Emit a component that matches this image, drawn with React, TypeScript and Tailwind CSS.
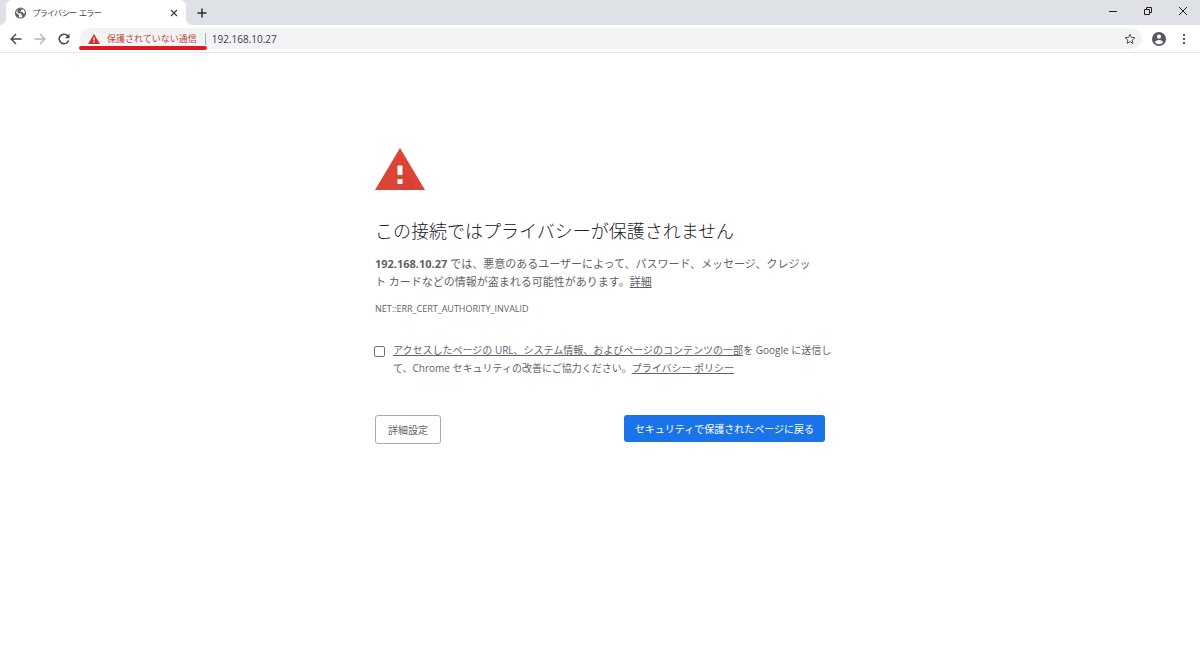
import type { ReactNode } from 'react';

interface IconButtonProps {
  label: string;
  className?: string;
  children: ReactNode;
}

function IconButton({ label, className = '', children }: IconButtonProps) {
  return (
    <button
      type="button"
      aria-label={label}
      className={`flex shrink-0 items-center justify-center ${className}`}
    >
      {children}
    </button>
  );
}

function TabStrip() {
  return (
    <div className="flex h-[25px] items-end bg-[#dee1e6] pl-1.5">
      <div className="relative flex h-[25px] w-[180px] items-center rounded-t-md bg-white pr-2 pl-2">
        <svg className="absolute bottom-0 -left-1.5 size-1.5" viewBox="0 0 6 6" fill="#fff" aria-hidden="true">
          <path d="M6 0v6H0a6 6 0 0 0 6-6z" />
        </svg>
        <svg className="absolute -right-1.5 bottom-0 size-1.5" viewBox="0 0 6 6" fill="#fff" aria-hidden="true">
          <path d="M0 0v6h6a6 6 0 0 1-6-6z" />
        </svg>
        <svg className="size-3 shrink-0" viewBox="0 0 12 12" aria-hidden="true">
          <circle cx="6.500" cy="6" r="5" fill="#fff" stroke="#5f6368" strokeWidth="1.1" />
          <path
            d="M1.600 5.200L5 8.200l-.2 2.600A5 5 0 0 1 1.600 5.200zM4.200 1.600L8.600 1.300c.3 1-.2 1.600-1.200 1.700-.2 1-1.200 1-1.300 1.800h2.300l.7 1.400 2.300.2c-.3 2-1.700 3.800-3.400 4.300l.2-1.900-1-1.200V6.400H4.600L3.100 4.800z"
            fill="#5f6368"
          />
        </svg>
        <span className="ml-[7px] grow text-[8px] leading-3 whitespace-nowrap text-[#45494d] [font-feature-settings:'palt']">
          プライバシー エラー
        </span>
        <IconButton label="タブを閉じる" className="size-2">
          <svg className="size-2" viewBox="0 0 8 8" stroke="#3c4043" strokeWidth="1.3">
            <path d="M1 1l6 6M7 1l-6 6" />
          </svg>
        </IconButton>
      </div>
      <IconButton label="新しいタブ" className="ml-2.5 h-[25px] w-3">
        <svg className="size-3" viewBox="0 0 12 12" stroke="#2b2e31" strokeWidth="1.5">
          <path d="M6 1.5v9M1.5 6h9" />
        </svg>
      </IconButton>
      <div className="ml-auto flex h-[25px] items-start">
        <IconButton label="最小化" className="h-[22px] w-[35px]">
          <svg className="size-2.5" viewBox="0 0 10 10" stroke="#222" strokeWidth="1">
            <path d="M1 5.5h8" />
          </svg>
        </IconButton>
        <IconButton label="元に戻す" className="h-[22px] w-[35px]">
          <svg className="size-2.5" viewBox="0 0 10 10" fill="none" stroke="#222" strokeWidth="1">
            <path d="M1.5 3.5h5v5h-5zM3.5 3.5v-2h5v5h-2" />
          </svg>
        </IconButton>
        <IconButton label="閉じる" className="h-[22px] w-[35px]">
          <svg className="size-2.5" viewBox="0 0 10 10" stroke="#222" strokeWidth="1">
            <path d="M1 1l8 8M9 1l-8 8" />
          </svg>
        </IconButton>
      </div>
    </div>
  );
}

function Toolbar() {
  return (
    <div className="flex h-7 items-center border-b border-[#e3e5e8] px-2.5">
      <IconButton label="戻る" className="w-3">
        <svg className="size-3" viewBox="0 0 12 12" fill="none" stroke="#45494d" strokeWidth="1.4">
          <path d="M11.5 6H1.5M6 1L1.2 6 6 11" />
        </svg>
      </IconButton>
      <IconButton label="進む" className="ml-3 w-3">
        <svg className="size-3" viewBox="0 0 12 12" fill="none" stroke="#b4b7ba" strokeWidth="1.4">
          <path d="M.5 6h10M6 1l4.8 5L6 11" />
        </svg>
      </IconButton>
      <IconButton label="再読み込み" className="ml-3 w-3">
        <svg className="size-3" viewBox="0 0 12 12" fill="none" stroke="#45494d" strokeWidth="1.5">
          <path d="M10.6 7.4A4.8 4.8 0 1 1 9.6 2.8L10.8 4" />
          <path d="M11.5.6v4.6H6.9z" fill="#45494d" stroke="none" />
        </svg>
      </IconButton>

      <div className="relative ml-2.5 flex h-[21px] grow items-center rounded-full bg-[#f1f3f4] pr-1.5 pl-2">
        <svg className="h-2.5 w-3 shrink-0" viewBox="0 0 12 10" aria-hidden="true">
          <path d="M6 0l6 10H0z" fill="#c5382c" />
          <path d="M5.4 3.6h1.2v2.8H5.4zM5.4 7.3h1.2v1.2H5.4z" fill="#fff" />
        </svg>
        <button
          type="button"
          className="ml-[7px] text-left text-[9px] leading-4 whitespace-nowrap text-[#c5483d]"
        >
          保護されていない通信
        </button>
        <span className="ml-2 h-3 w-px bg-[#a9acb0]" />
        <input
          type="text"
          aria-label="アドレス"
          defaultValue="192.168.10.27"
          className="ml-1.5 min-w-0 grow bg-transparent text-[10px] leading-4 text-[#3c4043] outline-none"
        />
        <IconButton label="ブックマークに追加" className="w-3">
          <svg className="size-3" viewBox="0 0 12 12" fill="none" stroke="#55595d" strokeWidth="1">
            <path d="M6 1.2l1.4 3.2 3.5.3-2.7 2.3.8 3.4L6 8.6l-3 1.8.8-3.4L1.1 4.7l3.500-.3z" />
          </svg>
        </IconButton>
        <span className="absolute top-[18px] -left-px h-1 w-32 rounded-full bg-[#e01a22]" />
      </div>

      <IconButton label="プロフィール" className="ml-2.5 w-3.5">
        <svg className="size-3.5" viewBox="0 0 14 14" aria-hidden="true">
          <circle cx="7" cy="7" r="7" fill="#55595d" />
          <circle cx="7" cy="4.700" r="2.1" fill="#fff" />
          <path d="M2.800 10.200c.6-1.500 2.700-2.200 4.200-2.200s3.600.7 4.200 2.200A5 5 0 0 1 7 12.200a5 5 0 0 1-4.200-2z" fill="#fff" />
        </svg>
      </IconButton>
      <IconButton label="メニュー" className="ml-3 w-3">
        <svg className="size-3" viewBox="0 0 12 12" fill="#55595d">
          <circle cx="6" cy="2" r="1.200" />
          <circle cx="6" cy="6" r="1.200" />
          <circle cx="6" cy="10" r="1.200" />
        </svg>
      </IconButton>
    </div>
  );
}

function PrivacyError() {
  return (
    <main className="mx-auto w-full max-w-[450px] pt-[95px] text-[#5f6368]">
      <svg className="h-[42px] w-[50px]" viewBox="0 0 50 42" aria-hidden="true">
        <path d="M25 0l25 42H0z" fill="#db4437" />
        <path d="M27 18l14 24H25l-2-6z" fill="#c93d30" opacity=".3" />
        <path d="M22.500 17.500h5v9.500h-5zM22.500 31h5v5h-5z" fill="#fff" />
      </svg>

      <h1 className="mt-7 text-lg leading-[26px] font-light whitespace-nowrap text-[#202124]">
        この接続ではプライバシーが保護されません
      </h1>
      <p className="mt-[11px] text-[11px] leading-[18px] whitespace-nowrap">
        <strong className="font-bold">192.168.10.27</strong>{' '}
        では、悪意のあるユーザーによって、パスワード、メッセージ、クレジッ
        <br />
        ト カードなどの情報が盗まれる可能性があります。
        <a href="#details" className="underline">
          詳細
        </a>
      </p>
      <p className="mt-2.5 text-[9px] leading-4">NET::ERR_CERT_AUTHORITY_INVALID</p>

      <div className="mt-6 flex items-start">
        <input
          id="report"
          type="checkbox"
          className="mt-[5px] -ml-px size-[11px] shrink-0 appearance-none rounded-xs border border-[#707478] bg-white checked:bg-[#1a73e8]"
        />
        <label htmlFor="report" className="ml-2 text-[10px] leading-[18px] whitespace-nowrap">
          <a href="#report-contents" className="underline">
            アクセスしたページの URL、システム情報、およびページのコンテンツの一部
          </a>
          を Google に送信し
          <br />
          て、Chrome セキュリティの改善にご協力ください。
          <a href="#privacy" className="underline">
            プライバシー ポリシー
          </a>
        </label>
      </div>

      <div className="mt-[38px] flex items-start justify-between">
        <button
          type="button"
          className="h-[29px] rounded-[3px] border border-[#a9acb0] bg-white px-3 text-[10px] leading-4"
        >
          詳細設定
        </button>
        <button
          type="button"
          className="h-[27px] rounded-[3px] bg-[#1a73e8] px-[11px] text-[10px] leading-4 text-white"
        >
          セキュリティで保護されたページに戻る
        </button>
      </div>
    </main>
  );
}

export default function App() {
  return (
    <div className="min-h-screen bg-white font-['Open_Sans','Noto_Sans_CJK_JP',sans-serif]">
      <TabStrip />
      <Toolbar />
      <PrivacyError />
    </div>
  );
}
